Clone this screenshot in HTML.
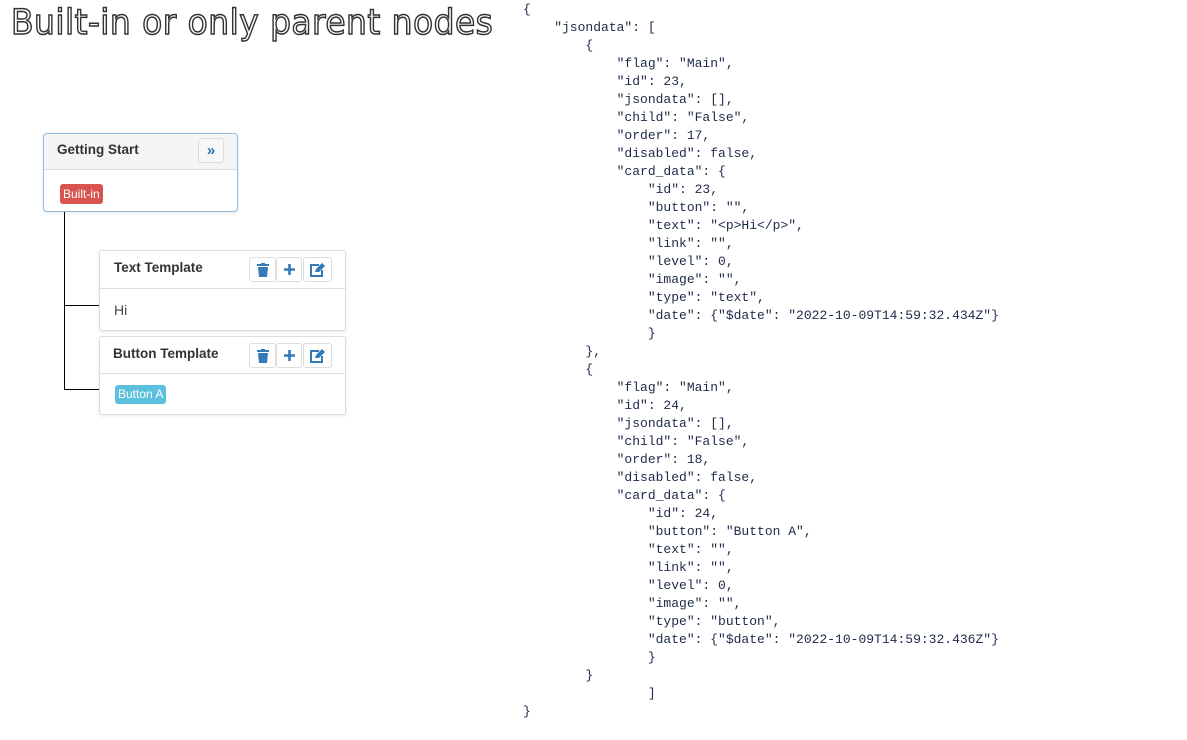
<!DOCTYPE html>
<html><head><meta charset="utf-8"><style>
body{margin:0;width:1187px;height:740px;background:#fff;position:relative;overflow:hidden;font-family:"Liberation Sans",Arial,sans-serif}
.title{position:absolute;left:11px;top:3px;font-size:35px;color:#fff;-webkit-text-stroke:1.5px #333;letter-spacing:0.5px;white-space:nowrap;font-family:"DejaVu Sans","Liberation Sans",sans-serif;transform:scaleX(0.94);transform-origin:left top}
.card{position:absolute;background:#fff;border:1px solid #ddd;border-radius:3px;box-shadow:0 1px 3px rgba(0,0,0,.1)}
.hd{border-bottom:1px solid #ddd;position:relative;font-weight:bold;font-size:13.5px;color:#333}
.btn{position:absolute;border:1px solid #ddd;border-radius:3px;background:#fff;box-sizing:border-box;display:flex;align-items:center;justify-content:center}
.lbl{position:absolute;color:#fff;font-size:12px;border-radius:3px;line-height:20px;padding:0 3px}
.ln{position:absolute;background:#000}
pre{position:absolute;left:523px;top:1px;margin:0;font-family:"Liberation Mono",monospace;font-size:13px;line-height:18px;color:#1d2a48}
</style></head><body>
<div class="title">Built-in or only parent nodes</div>

<div class="ln" style="left:64px;top:212px;width:1px;height:178px"></div>
<div class="ln" style="left:64px;top:305px;width:35px;height:1px"></div>
<div class="ln" style="left:64px;top:389px;width:35px;height:1px"></div>

<div class="card" style="left:43px;top:133px;width:193px;height:77px;border-color:#8fbde4;border-radius:4px">
 <div class="hd" style="height:35px;background:#f5f5f5;border-radius:4px 4px 0 0"><span style="position:absolute;left:13px;top:8px">Getting Start</span>
  <div class="btn" style="left:154px;top:4px;width:26px;height:25px;background:#f8f8f8;color:#2c6ea8;font-size:15px;font-weight:bold">»</div></div>
 <div class="lbl" style="left:16px;top:50px;background:#d9534f">Built-in</div>
</div>

<div class="card" style="left:99px;top:250px;width:245px;height:79px">
 <div class="hd" style="height:37px"><span style="position:absolute;left:14px;top:9px">Text Template</span>
  <div class="btn" style="left:149px;top:6px;width:27px;height:25px"><svg width="12" height="14" viewBox="0 0 12 14"><rect x="0" y="1" width="12" height="2" fill="#337ab7"/><rect x="4" y="0" width="4" height="2" fill="#337ab7"/><path d="M1 4h10l-1 10H2z" fill="#337ab7"/></svg></div>
  <div class="btn" style="left:176px;top:6px;width:26px;height:25px"><svg width="13" height="13"><path d="M6.5 1v11M1 6.5h11" stroke="#337ab7" stroke-width="2.6"/></svg></div>
  <div class="btn" style="left:203px;top:6px;width:29px;height:25px"><svg width="15" height="14" viewBox="0 0 15 14"><path d="M9 2H1v11h11V7" fill="none" stroke="#337ab7" stroke-width="2"/><path d="M5 9l1-3 6-6 3 3-6 6z" fill="#337ab7"/></svg></div></div>
 <div style="position:absolute;left:14px;top:51px;font-size:14px;color:#444">Hi</div>
</div>

<div class="card" style="left:99px;top:336px;width:245px;height:77px">
 <div class="hd" style="height:36px"><span style="position:absolute;left:13px;top:9px">Button Template</span>
  <div class="btn" style="left:149px;top:6px;width:27px;height:25px"><svg width="12" height="14" viewBox="0 0 12 14"><rect x="0" y="1" width="12" height="2" fill="#337ab7"/><rect x="4" y="0" width="4" height="2" fill="#337ab7"/><path d="M1 4h10l-1 10H2z" fill="#337ab7"/></svg></div>
  <div class="btn" style="left:176px;top:6px;width:26px;height:25px"><svg width="13" height="13"><path d="M6.5 1v11M1 6.5h11" stroke="#337ab7" stroke-width="2.6"/></svg></div>
  <div class="btn" style="left:203px;top:6px;width:29px;height:25px"><svg width="15" height="14" viewBox="0 0 15 14"><path d="M9 2H1v11h11V7" fill="none" stroke="#337ab7" stroke-width="2"/><path d="M5 9l1-3 6-6 3 3-6 6z" fill="#337ab7"/></svg></div></div>
 <div class="lbl" style="left:15px;top:48px;background:#5bc0de;line-height:19px">Button A</div>
</div>

<pre>{
    "jsondata": [
        {
            "flag": "Main",
            "id": 23,
            "jsondata": [],
            "child": "False",
            "order": 17,
            "disabled": false,
            "card_data": {
                "id": 23,
                "button": "",
                "text": "&lt;p&gt;Hi&lt;/p&gt;",
                "link": "",
                "level": 0,
                "image": "",
                "type": "text",
                "date": {"$date": "2022-10-09T14:59:32.434Z"}
                }
        },
        {
            "flag": "Main",
            "id": 24,
            "jsondata": [],
            "child": "False",
            "order": 18,
            "disabled": false,
            "card_data": {
                "id": 24,
                "button": "Button A",
                "text": "",
                "link": "",
                "level": 0,
                "image": "",
                "type": "button",
                "date": {"$date": "2022-10-09T14:59:32.436Z"}
                }
        }
                ]
}</pre>
</body></html>
